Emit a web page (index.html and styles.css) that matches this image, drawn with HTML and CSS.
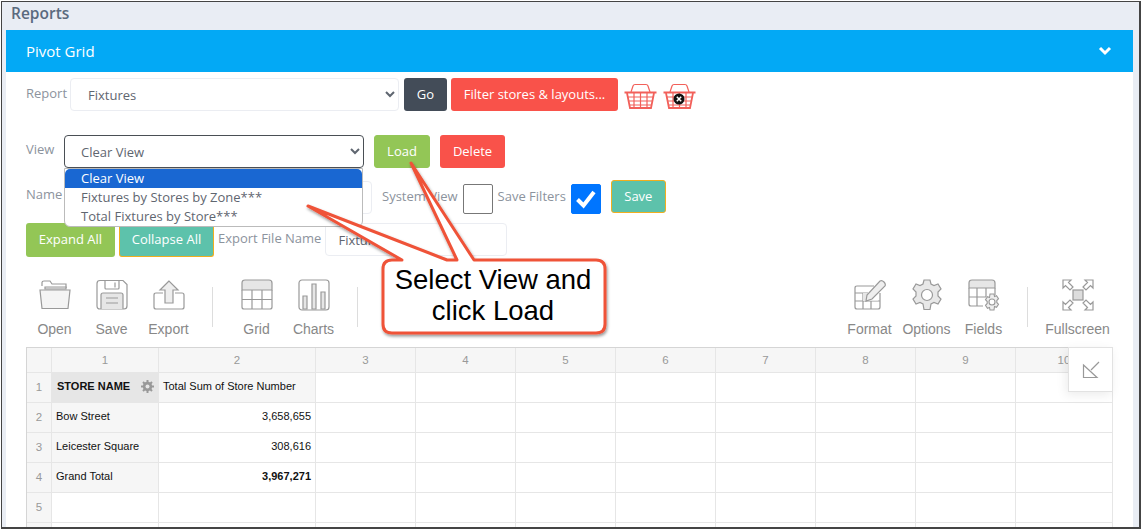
FILE: index.html
```html
<!DOCTYPE html>
<html lang="en">
<head>
<meta charset="utf-8">
<title>Reports - Pivot Grid</title>
<link rel="stylesheet" href="styles.css">
</head>
<body>
<div class="frame">
  <h1 class="page-title">Reports</h1>
  <section class="card">
    <header class="card-head">
      <span>Pivot Grid</span>
      <svg class="chev" width="14" height="10" viewBox="0 0 14 10"><path d="M2 2l5 5 5-5" fill="none" stroke="#fff" stroke-width="3"/></svg>
    </header>
    <div class="card-body">
      <div class="row row-report">
        <label class="lbl lbl-report">Report</label>
        <select class="sel sel-report"><option>Fixtures</option></select>
        <button class="btn btn-dark btn-go">Go</button>
        <button class="btn btn-red btn-filter">Filter stores &amp; layouts...</button>
        <svg class="basket" width="33" height="28" viewBox="0 0 33 28">
          <g fill="none" stroke="#f2605a" stroke-width="1.200"><path d="M7 10l2-6q.5-1.500 2-1.500h11q1.500 0 2 1.500l2 6"/><path d="M.5 10.500h32" stroke-width="1.800"/><path d="M3 11l3 15h21l3-15" stroke-width="1.800"/><path d="M4 15h25M5 19h23M6 23h21M10 11v15M16.500 11v15M23 11v15"/></g>
        </svg>
        <span class="basket-x">
          <svg width="33" height="28" viewBox="0 0 33 28">
            <g fill="none" stroke="#f2605a" stroke-width="1.200"><path d="M7 10l2-6q.5-1.500 2-1.500h11q1.500 0 2 1.500l2 6"/><path d="M.5 10.500h32" stroke-width="1.800"/><path d="M3 11l3 15h21l3-15" stroke-width="1.800"/><path d="M4 15h25M5 19h23M6 23h21M10 11v15M16.500 11v15M23 11v15"/></g>
            <circle cx="16" cy="17" r="5.500" fill="#111"/><path d="M13.800 14.800l4.400 4.400M18.200 14.800l-4.400 4.400" stroke="#fff" stroke-width="1.500"/>
          </svg>
        </span>
      </div>
      <div class="row row-view">
        <label class="lbl lbl-view">View</label>
        <select class="sel sel-view"><option>Clear View</option></select>
        <button class="btn btn-green btn-load">Load</button>
        <button class="btn btn-red btn-delete">Delete</button>
      </div>
      <div class="row row-name">
        <label class="lbl lbl-name">Name</label>
        <input class="inp inp-name" type="text">
        <span class="lbl lbl-sys">System View</span>
        <span class="box"></span>
        <span class="lbl lbl-filters">Save Filters</span>
        <span class="box box-on"><svg width="22" height="20" viewBox="0 0 22 20"><path d="M2.500 10.500l6 6L19 3" fill="none" stroke="#fff" stroke-width="4"/></svg></span>
        <button class="btn btn-teal btn-save">Save</button>
      </div>
      <div class="row row-export">
        <button class="btn btn-green btn-expand">Expand All</button>
        <button class="btn btn-teal btn-collapse">Collapse All</button>
        <label class="lbl lbl-export">Export File Name</label>
        <input class="inp inp-export" type="text" value="Fixtures">
      </div>

      <div class="toolbar">
        <div class="tool-group">
          <div class="tool"><svg width="32" height="32" viewBox="0 0 32 32"><g fill="none" stroke="#999" stroke-width="1.200"><path d="M3 7V3.500Q3 2 5 2h6l2 3h14v4"/><path d="M6 8h21v2H6z" fill="#eee"/><path d="M1 11h30l-2 18.500H3z" fill="#f4f4f4"/></g></svg><span>Open</span></div>
          <div class="tool"><svg width="32" height="32" viewBox="0 0 32 32"><g fill="none" stroke="#999" stroke-width="1.200"><path d="M4 1.500h23l4 4V27q0 3-3 3H4q-3 0-3-3V4.500q0-3 3-3z"/><path d="M9 2v7q0 1 1 1h12q1 0 1-1V2"/><path d="M19 3.500v5"/><path d="M5 30V16q0-2 2-2h18q2 0 2 2v14" fill="#e6e6e6"/><path d="M10 19h12M10 24h12"/></g></svg><span>Save</span></div>
          <div class="tool"><svg width="32" height="32" viewBox="0 0 32 32"><g fill="none" stroke="#999" stroke-width="1.200"><path d="M10 14H3q-2 0-2 2v12q0 2 2 2h26q2 0 2-2V16q0-2-2-2h-7"/><path d="M16 2l-9 9h5v13h8V11h5z" fill="#eee"/></g></svg><span>Export</span></div>
        </div>
        <i class="tool-sep"></i>
        <div class="tool-group">
          <div class="tool"><svg width="32" height="32" viewBox="0 0 32 32"><g fill="none" stroke="#999" stroke-width="1.200"><path d="M1 11V4q0-3 3-3h24q3 0 3 3v7z" fill="#e6e6e6"/><path d="M1 11v17q0 2 2 2h26q2 0 2-2V11M1 20.500h30M11 11v19M21 11v19"/></g></svg><span>Grid</span></div>
          <div class="tool"><svg width="32" height="32" viewBox="0 0 32 32"><g fill="none" stroke="#999" stroke-width="1.200"><rect x="1" y="1" width="30" height="30" rx="3"/><path d="M5 17h4v13H5zM14 5h4v25h-4zM23 13h4v17h-4z" fill="#e6e6e6"/></g></svg><span>Charts</span></div>
        </div>
        <i class="tool-sep"></i>
        <div class="tool-spacer"></div>
        <div class="tool-group">
          <div class="tool"><svg width="32" height="32" viewBox="0 0 32 32"><g fill="none" stroke="#999" stroke-width="1.200"><path d="M20 7H3q-2 0-2 2v19q0 2 2 2h21q2 0 2-2V14"/><path d="M1 14h13M1 22h25M9 14v16M17 22v8" /><path d="M9 14h5l-1 7h11v1H9z" fill="#e6e6e6" stroke="none"/><path d="M12 22l1-6L26 2q2-1 4 1t1 4L18 20z" fill="#eee"/></g></svg><span>Format</span></div>
          <div class="tool"><svg width="32" height="32" viewBox="0 0 32 32"><g stroke="#999" stroke-width="1.200"><path fill="#e8e8e8" d="M13 1h6l1 4 3 1.500 4-1.500 3 5-3 3v4l3 3-3 5-4-1.500-3 1.500-1 5.500h-6l-1-5.500-3-1.500-4 1.500-3-5 3-3v-4l-3-3 3-5 4 1.500L12 5z"/><circle cx="16" cy="16" r="5.500" fill="#fff"/></g></svg><span>Options</span></div>
          <div class="tool"><svg width="32" height="32" viewBox="0 0 32 32"><g fill="none" stroke="#999" stroke-width="1.200"><path d="M1 9V4q0-3 3-3h20q3 0 3 3v5z" fill="#e6e6e6"/><path d="M1 9v16q0 2 2 2h12M27 9v7M1 18h17M9 9v18M18 9v9"/></g><g stroke="#999" stroke-width="1.100"><path fill="#eee" d="M22 15h4l.5 2.500 2-.8 2 3-1.700 1.800v2l1.700 1.800-2 3-2-.8L26 31h-4l-.5-2.500-2 .8-2-3 1.700-1.800v-2l-1.700-1.800 2-3 2 .8z"/><circle cx="24" cy="23" r="3" fill="#fff"/></g></svg><span>Fields</span></div>
        </div>
        <i class="tool-sep"></i>
        <div class="tool tool-wide"><svg width="32" height="32" viewBox="0 0 32 32"><g fill="none" stroke="#999" stroke-width="1.200"><path d="M1 1h8l-2.500 2.500L11 8l-3 3-4.500-4.500L1 9zM31 1h-8l2.500 2.500L21 8l3 3 4.500-4.500L31 9zM1 31h8l-2.500-2.500L11 24l-3-3-4.500 4.500L1 23zM31 31h-8l2.500-2.500L21 24l3-3 4.500 4.500L31 23z"/><rect x="11" y="11" width="10" height="10" fill="#ddd"/></g></svg><span>Fullscreen</span></div>
      </div>

      <div class="pivot">
        <div class="pv hd corner"></div><div class="pv hd">1</div><div class="pv hd">2</div><div class="pv hd">3</div><div class="pv hd">4</div><div class="pv hd">5</div><div class="pv hd">6</div><div class="pv hd">7</div><div class="pv hd">8</div><div class="pv hd">9</div><div class="pv hd">10</div>
        <div class="pv hd">1</div><div class="pv field">STORE NAME<svg class="gear" width="13" height="13" viewBox="0 0 13 13"><circle cx="6.500" cy="6.500" r="3.500" fill="none" stroke="#999" stroke-width="2.500"/><path d="M6.500 0v13M0 6.500h13M2 2l9 9M11 2l-9 9" stroke="#999" stroke-width="2"/><circle cx="6.500" cy="6.500" r="2" fill="#e6e6e6"/></svg></div><div class="pv measure">Total Sum of Store Number</div><div class="pv"></div><div class="pv"></div><div class="pv"></div><div class="pv"></div><div class="pv"></div><div class="pv"></div><div class="pv"></div><div class="pv"></div>
        <div class="pv hd">2</div><div class="pv member">Bow Street</div><div class="pv num">3,658,655</div><div class="pv"></div><div class="pv"></div><div class="pv"></div><div class="pv"></div><div class="pv"></div><div class="pv"></div><div class="pv"></div><div class="pv"></div>
        <div class="pv hd">3</div><div class="pv member">Leicester Square</div><div class="pv num">308,616</div><div class="pv"></div><div class="pv"></div><div class="pv"></div><div class="pv"></div><div class="pv"></div><div class="pv"></div><div class="pv"></div><div class="pv"></div>
        <div class="pv hd">4</div><div class="pv member">Grand Total</div><div class="pv num total">3,967,271</div><div class="pv"></div><div class="pv"></div><div class="pv"></div><div class="pv"></div><div class="pv"></div><div class="pv"></div><div class="pv"></div><div class="pv"></div>
        <div class="pv hd">5</div><div class="pv"></div><div class="pv"></div><div class="pv"></div><div class="pv"></div><div class="pv"></div><div class="pv"></div><div class="pv"></div><div class="pv"></div><div class="pv"></div><div class="pv"></div>
        <div class="pv hd blank"></div><div class="pv"></div><div class="pv"></div><div class="pv"></div><div class="pv"></div><div class="pv"></div><div class="pv"></div><div class="pv"></div><div class="pv"></div><div class="pv"></div><div class="pv"></div>
        <div class="collapse-box"><svg width="18" height="18" viewBox="0 0 18 18"><path d="M17 1L9 9M1.500 4L15 16.500H1.500z" fill="none" stroke="#999" stroke-width="1.200"/></svg></div>
      </div>
    </div>
  </section>

  <ul class="dropdown">
    <li class="on">Clear View</li>
    <li>Fixtures by Stores by Zone***</li>
    <li>Total Fixtures by Store***</li>
  </ul>

  <svg class="callout-art" width="1142" height="530" viewBox="0 0 1142 530">
    <defs><filter id="sh" x="-10%" y="-10%" width="120%" height="120%"><feDropShadow dx="1" dy="2" stdDeviation="1.500" flood-color="#000" flood-opacity=".4"/></filter></defs>
    <path filter="url(#sh)" fill="#fff" stroke="#ef5239" stroke-width="3" stroke-linejoin="round" d="M392 260H402L308 206L447 260H457L411 163L474 260H596Q605 260 605 269V324Q605 333 596 333H392Q383 333 383 324V269Q383 260 392 260Z"/>
  </svg>
  <div class="callout-text">Select View and<br>click Load</div>
</div>
</body>
</html>
```
FILE: styles.css
```css
* { box-sizing: border-box; }
html, body { margin: 0; padding: 0; background: #fff; }
body { width: 1142px; height: 530px; overflow: hidden; font-family: "Open Sans", "Liberation Sans", sans-serif; }

.frame {
  position: relative;
  width: 1140px;
  height: 528px;
  margin: 1px 0 0 1px;
  border: 1px solid #444;
  border-width: 1px 2px 2px 1px;
  background: #e9edf4;
  padding: 0 5px 0 4px;
  overflow: hidden;
}
.page-title {
  margin: 0;
  height: 28px;
  padding-left: 5px;
  font-size: 15.500px;
  line-height: 22px;
  font-weight: 600;
  color: #5a6a7e;
}
.card { background: #fff; height: 498px; width: 1127px; overflow: hidden; }
.card-head {
  height: 42px;
  background: #03a9f5;
  color: #fff;
  font-size: 15px;
  font-weight: 400;
  padding: 0 21px 0 20px;
  display: flex;
  align-items: center;
  justify-content: space-between;
}
.card-body { padding: 6px 21px 0 20px; position: relative; }

.row { display: flex; align-items: flex-start; font-size: 13px; }
.row-report { height: 57px; }
.row-view { height: 45px; }
.row-name { height: 43px; }
.row-export { height: 56px; }

.lbl { color: #8c939d; font-size: 13px; line-height: 18px; white-space: nowrap; }
.lbl-report { width: 44px; margin-top: 6px; }
.lbl-view { width: 38px; margin-top: 5px; }
.lbl-name { width: 38px; margin-top: 5px; }
.lbl-sys { margin: 7px 5px 0 10px; }
.lbl-filters { margin: 7px 5px 0 5px; }
.lbl-export { margin: 6px 3px 0 4px; }

.sel {
  font: 13px "Open Sans", sans-serif;
  color: #5f6670;
  background: #fff;
  border: 1px solid #ebedf2;
  border-radius: 4px;
  padding: 0 12px;
}
.sel-report { width: 329px; height: 33px; padding-left: 13px; }
.sel-view { width: 300px; height: 33px; border-color: #4a4f55; }

.btn {
  font: 13px "Open Sans", sans-serif;
  color: #fff;
  border: 1px solid transparent;
  border-radius: 3px;
  padding: 0 0 2px;
  height: 33px;
  white-space: nowrap;
}
.btn-dark { background: #434c58; }
.btn-red { background: #f9524a; }
.btn-green { background: #93c656; }
.btn-teal { background: #5dc2ab; border-color: #f1ae1f; }
.btn-go { width: 43px; margin-left: 5px; }
.btn-filter { width: 167px; margin-left: 4px; }
.btn-load { width: 56px; margin-left: 10px; border-color: #93c656; }
.btn-delete { width: 65px; margin-left: 10px; }
.btn-save { width: 55px; margin-left: 10px; }
.btn-expand { width: 89px; height: 34px; }
.btn-collapse { width: 95px; height: 34px; margin-left: 4px; border-width: 0 1px 1px; }

.basket { margin: 4px 0 0 6px; }
.basket-x { margin: 4px 0 0 6px; display: block; height: 28px; }

.inp {
  font: 13px "Open Sans", sans-serif;
  color: #5f6670;
  background: #fff;
  border: 1px solid #ebedf2;
  border-radius: 4px;
  padding: 0 12px;
  height: 33px;
}
.inp-name { width: 308px; margin-top: 1px; }
.inp-export { width: 182px; margin-left: 1px; }

.box {
  width: 30px;
  height: 30px;
  margin-top: 4px;
  border: 1px solid #777;
  border-radius: 2px;
  background: #fff;
  display: flex;
  align-items: center;
  justify-content: center;
}
.box-on { background: #0075ff; border-color: #0075ff; }

.toolbar { display: flex; height: 68px; align-items: flex-start; }
.tool-group { display: flex; }
.tool {
  width: 57px;
  display: flex;
  flex-direction: column;
  align-items: center;
  color: #888;
  font: 14px/16px "Liberation Sans", Arial, sans-serif;
}
.tool svg { margin-bottom: 10px; height: 32px; }
.tool-wide { width: 69px; }
.tool-sep { display: block; width: 1px; height: 40px; background: #ddd; margin: 8px 15px 0; flex: none; }
.tool-spacer { flex: 1; }

.pivot {
  position: relative;
  display: grid;
  grid-template-columns: 25px 107px 157px repeat(7, 100px) 97px;
  grid-auto-rows: 30px;
  grid-template-rows: 25px;
  width: 1086px;
  border-top: 1px solid #d5d5d5;
  border-left: 1px solid #d5d5d5;
  font: 11px "Liberation Sans", Arial, sans-serif;
  color: #111;
}
.pv {
  border-right: 1px solid #e6e6e6;
  border-bottom: 1px solid #e6e6e6;
  display: flex;
  align-items: center;
  padding: 0 4px 4px;
  white-space: nowrap;
  overflow: hidden;
}
.hd { background: #f6f6f6; color: #999; justify-content: center; padding: 0 0 1px; font-size: 11.500px; }
.field { background: #e6e6e6; font-weight: 700; justify-content: space-between; padding: 0 4px 4px 5px; }
.field .gear { margin-top: 2px; }
.measure { background: #f6f6f6; padding-left: 4px; }
.member { background: #f6f6f6; }
.num { justify-content: flex-end; font-size: 11px; }
.total { font-weight: 700; }
.collapse-box {
  position: absolute;
  top: -1px;
  right: -1px;
  width: 45px;
  height: 45px;
  background: #fff;
  border: 1px solid #e2e2e2;
  box-shadow: -2px 3px 10px rgba(0,0,0,.08);
  display: flex;
  align-items: center;
  justify-content: center;
}

.dropdown {
  position: absolute;
  left: 62px;
  top: 166px;
  width: 299px;
  height: 59px;
  margin: 0;
  padding: 0;
  list-style: none;
  background: #fff;
  border: 1px solid #bbb;
  border-radius: 0 0 6px 6px;
  font-size: 13px;
  line-height: 19px;
  color: #5f6670;
  overflow: hidden;
}
.dropdown li { padding-left: 16px; height: 19px; }
.dropdown .on { background: #1967d2; color: #fff; border-radius: 5px 5px 0 0; }

.callout-art { position: absolute; left: -2px; top: -2px; }
.callout-text {
  position: absolute;
  left: 380px;
  top: 262px;
  width: 222px;
  text-align: center;
  font: 27.500px/31px "Liberation Sans", Arial, sans-serif;
  color: #000;
}
```
